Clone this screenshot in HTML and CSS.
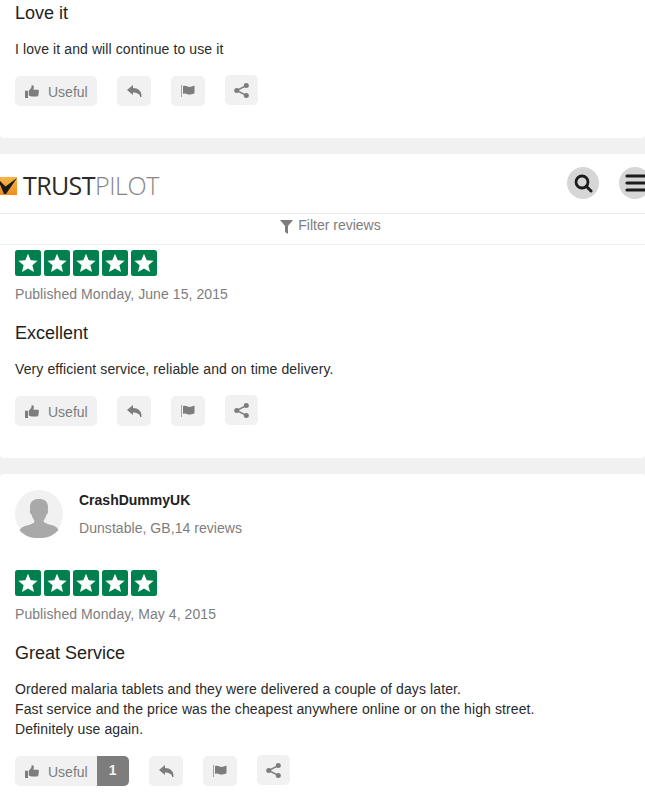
FILE: index.html
```html
<!DOCTYPE html>
<html lang="en">
<head>
<meta charset="utf-8">
<title>Reviews</title>
<link rel="stylesheet" href="styles.css">
</head>
<body>
<svg class="defs" width="0" height="0" aria-hidden="true">
  <defs>
    <linearGradient id="orange" x1="0" y1="0" x2="0" y2="1">
      <stop offset="0" stop-color="#f7b548"/><stop offset="1" stop-color="#f08c1e"/>
    </linearGradient>
    <symbol id="thumb" viewBox="0 0 14 13">
      <path d="M0 5.700h3V13H0zM3.800 5.800 6.200 3 6.800 0c1.500 0 2.100 1.100 2.100 2.300L8.400 4.700h4.300c.8 0 1.300.6 1.300 1.300 0 .4-.2.800-.4 1 .3.300.3 1.100 0 1.400.2.400.1 1.100-.3 1.400.2.900-.3 1.700-1.100 1.700H8c-1.800 0-3-.5-4.200-1.100z"/>
    </symbol>
    <symbol id="reply" viewBox="0 0 15 12">
      <path d="M0 5 6 0v3c5 0 9 3 8.500 9h-1.300C13 9.200 10 7.500 6 7.500V10z"/>
    </symbol>
    <symbol id="flag" viewBox="0 0 14 12">
      <path d="M0 0h1v12H0z" opacity=".65"/>
      <path d="M2 1.200c2.500-1.300 4.200.7 6.300.7 1.600 0 3.300-.5 5.200-1.400v7.700c-1.700.9-3.400 1.400-5.200 1.400-2.100 0-3.800-2-6.300-.7z"/>
    </symbol>
    <symbol id="share" viewBox="0 0 15 15">
      <circle cx="2.700" cy="7.500" r="2.500"/><circle cx="12.300" cy="2.600" r="2.500"/><circle cx="12.300" cy="12.400" r="2.500"/>
      <path d="M2.700 7.500 12.300 2.600M2.700 7.500l9.600 4.900" fill="none" stroke="#7d7d7d" stroke-width="1.500"/>
    </symbol>
    <symbol id="star" viewBox="0 0 26 26">
      <rect width="26" height="26" rx="2.500" fill="#00804f"/>
      <path d="m13 3.800 2.700 6.400 6.900.6-5.200 4.500 1.600 6.800-6-3.600-6 3.600 1.600-6.800-5.200-4.500 6.900-.6z" fill="#fff"/>
    </symbol>
  </defs>
</svg>

<section class="card card-first">
  <h2 class="title">Love it</h2>
  <p class="body">I love it and will continue to use it</p>
  <div class="actions">
    <button class="btn btn-useful"><svg class="ico ico-thumb"><use href="#thumb"/></svg><span class="useful-label">Useful</span></button>
    <button class="btn btn-icon"><svg class="ico ico-reply"><use href="#reply"/></svg></button>
    <button class="btn btn-icon"><svg class="ico"><use href="#flag"/></svg></button>
    <button class="btn btn-icon btn-share"><svg class="ico ico-share"><use href="#share"/></svg></button>
  </div>
</section>

<header class="topbar">
  <div class="logo">
    <svg class="logo-mark" viewBox="0 0 17 18" width="17" height="18" aria-hidden="true">
      <rect x="-3" width="20" height="18" fill="url(#orange)"/>
      <path d="M0 7.500 4 17h2L17 1 5.500 9.500 0 4z" fill="#1a1a1a"/>
    </svg>
    <span class="logo-text">TRUST<span class="logo-light">PILOT</span></span>
  </div>
  <div class="top-icons">
    <span class="round"><svg viewBox="0 0 20 20" width="20" height="20" aria-hidden="true"><circle cx="9" cy="9" r="6" fill="none" stroke="#1c1c1c" stroke-width="2.800"/><path d="m13.500 13.500 4.500 4.500" stroke="#1c1c1c" stroke-width="3" stroke-linecap="round"/></svg></span>
    <span class="round"><svg viewBox="0 0 24 20" width="24" height="20" aria-hidden="true"><path d="M4 3h20M4 10h20M4 17h20" stroke="#1c1c1c" stroke-width="3.200" stroke-linecap="round"/></svg></span>
  </div>
</header>
<div class="filter">
  <svg viewBox="0 0 13 14" width="13" height="14" aria-hidden="true"><path d="M0 0h13L8 6v8L5 12V6z" fill="#7d7d7d"/></svg>
  <span>Filter reviews</span>
</div>

<section class="card card-second">
  <div class="stars"><svg class="star"><use href="#star"/></svg><svg class="star"><use href="#star"/></svg><svg class="star"><use href="#star"/></svg><svg class="star"><use href="#star"/></svg><svg class="star"><use href="#star"/></svg></div>
  <p class="date">Published Monday, June 15, 2015</p>
  <h2 class="title">Excellent</h2>
  <p class="body">Very efficient service, reliable and on time delivery.</p>
  <div class="actions">
    <button class="btn btn-useful"><svg class="ico ico-thumb"><use href="#thumb"/></svg><span class="useful-label">Useful</span></button>
    <button class="btn btn-icon"><svg class="ico ico-reply"><use href="#reply"/></svg></button>
    <button class="btn btn-icon"><svg class="ico"><use href="#flag"/></svg></button>
    <button class="btn btn-icon btn-share"><svg class="ico ico-share"><use href="#share"/></svg></button>
  </div>
</section>

<section class="card card-third">
  <div class="user">
    <svg class="avatar" viewBox="0 0 48 48" width="48" height="48" aria-hidden="true">
      <circle cx="24" cy="24" r="24" fill="#f1f1f1"/>
      <path d="M24 9c-5.500 0-9 2.500-9 8 0 2 .4 3.500-.2 4 0 1.500.8 3 1.700 3.500.8 3 1.800 4.500 2.700 5.500v2.500c-2 1.500-5.500 2.500-9.200 3.500-2.500.7-4.500 2.500-5.500 4.500A24 24 0 0 0 24 48a24 24 0 0 0 19.500-8c-1-2-3-3.800-5.500-4.500-3.700-1-7.200-2-9.200-3.500V30c.9-1 1.900-2.500 2.700-5.500.9-.5 1.700-2 1.700-3.500-.6-.5-.2-2-.2-4 0-5.500-3.500-8-9-8z" fill="#a9a9a9"/>
    </svg>
    <div class="user-info">
      <div class="user-name">CrashDummyUK</div>
      <div class="user-meta">Dunstable, GB,14 reviews</div>
    </div>
  </div>
  <div class="stars"><svg class="star"><use href="#star"/></svg><svg class="star"><use href="#star"/></svg><svg class="star"><use href="#star"/></svg><svg class="star"><use href="#star"/></svg><svg class="star"><use href="#star"/></svg></div>
  <p class="date">Published Monday, May 4, 2015</p>
  <h2 class="title">Great Service</h2>
  <p class="body">Ordered malaria tablets and they were delivered a couple of days later.<br>Fast service and the price was the cheapest anywhere online or on the high street.<br>Definitely use again.</p>
  <div class="actions">
    <button class="btn btn-useful btn-counted"><svg class="ico ico-thumb"><use href="#thumb"/></svg><span class="useful-label">Useful</span><span class="count">1</span></button>
    <button class="btn btn-icon"><svg class="ico ico-reply"><use href="#reply"/></svg></button>
    <button class="btn btn-icon"><svg class="ico"><use href="#flag"/></svg></button>
    <button class="btn btn-icon btn-share"><svg class="ico ico-share"><use href="#share"/></svg></button>
  </div>
</section>
</body>
</html>
```
FILE: styles.css
```css
* { box-sizing: border-box; }
html, body { margin: 0; padding: 0; }
body {
  width: 645px;
  height: 795px;
  overflow: hidden;
  background: #f1f1f1;
  font-family: "Liberation Sans", Arial, sans-serif;
  color: #222;
}
.defs { position: absolute; }
.card {
  background: #fff;
  padding-left: 15px;
  padding-right: 15px;
  border-radius: 4px;
}
.card-first { height: 138px; padding-top: 3px; border-radius: 0 0 4px 4px; }
.card-second { height: 213px; padding-top: 5px; border-radius: 0 0 4px 4px; }
.card-third { margin-top: 16px; padding-top: 16px; height: 340px; }
.title {
  margin: 0;
  font-size: 18px;
  line-height: 20px;
  font-weight: 400;
  color: #1e1e1e;
}
.body {
  margin: 16px 0 0;
  font-size: 14px;
  line-height: 20px;
  letter-spacing: .1px;
  color: #2a2a2a;
}
.date {
  margin: 8px 0 0;
  font-size: 14px;
  line-height: 20px;
  letter-spacing: .07px;
  color: #7d7d7d;
}
.date + .title { margin-top: 19px; }
.actions {
  display: flex;
  align-items: flex-start;
  gap: 20px;
  margin-top: 17px;
}
.btn {
  display: flex;
  align-items: center;
  height: 30px;
  border: 0;
  padding: 0;
  background: #f1f1f1;
  border-radius: 5px;
  color: #7d7d7d;
  font: 14px "Liberation Sans", Arial, sans-serif;
  overflow: hidden;
}
.btn-useful { padding-left: 10px; padding-right: 10px; width: 82px; }
.btn-counted { width: 114px; padding-right: 0; }
.btn-icon { width: 34px; justify-content: center; }
.btn-share { width: 33px; margin-top: -1px; }
.ico { width: 14px; height: 12px; fill: #7d7d7d; flex: none; }
.ico-thumb { height: 13px; }
.ico-reply { width: 15px; }
.ico-share { width: 15px; height: 15px; }
.useful-label { margin-left: 9px; padding-top: 2px; }
.count {
  margin-left: 9px;
  width: 32px;
  height: 30px;
  line-height: 28px;
  background: #7d7d7d;
  color: #f1f1f1;
  font-weight: 700;
  text-align: center;
  flex: none;
}
.topbar {
  margin-top: 16px;
  height: 60px;
  background: #fff;
  border-bottom: 1px solid #ebebeb;
  display: flex;
  align-items: center;
  justify-content: space-between;
  overflow: hidden;
}
.logo { display: flex; align-items: center; gap: 6px; margin-top: 3px; }
.logo-mark { display: block; margin-top: 1px; }
.logo-text {
  font-family: "Open Sans", sans-serif;
  font-size: 25px;
  line-height: 30px;
  letter-spacing: -.6px;
  color: #2b2b2b;
}
.logo-light { color: #858585; font-weight: 300; letter-spacing: -.4px; }
.top-icons {
  display: flex;
  gap: 20px;
  margin-right: -6px;
  margin-top: -2px;
}
.round {
  width: 32px;
  height: 32px;
  border-radius: 50%;
  background: #d6d6d6;
  display: flex;
  align-items: center;
  justify-content: center;
}
.filter {
  height: 31px;
  background: #fff;
  border-bottom: 1px solid #f1f1f1;
  display: flex;
  align-items: flex-start;
  justify-content: center;
  gap: 5px;
  padding-left: 16px;
  padding-top: 3px;
  font-size: 14px;
  line-height: 16px;
  color: #7d7d7d;
}
.filter svg { margin-top: 3px; }
.stars { display: flex; gap: 3px; }
.star { width: 26px; height: 26px; display: block; }
.user { display: flex; gap: 16px; margin-bottom: 32px; }
.avatar { display: block; flex: none; }
.user-name {
  font-size: 14px;
  line-height: 20px;
  font-weight: 700;
  color: #222;
}
.user-meta {
  margin-top: 8px;
  font-size: 14px;
  line-height: 20px;
  letter-spacing: .05px;
  color: #7d7d7d;
}
```
